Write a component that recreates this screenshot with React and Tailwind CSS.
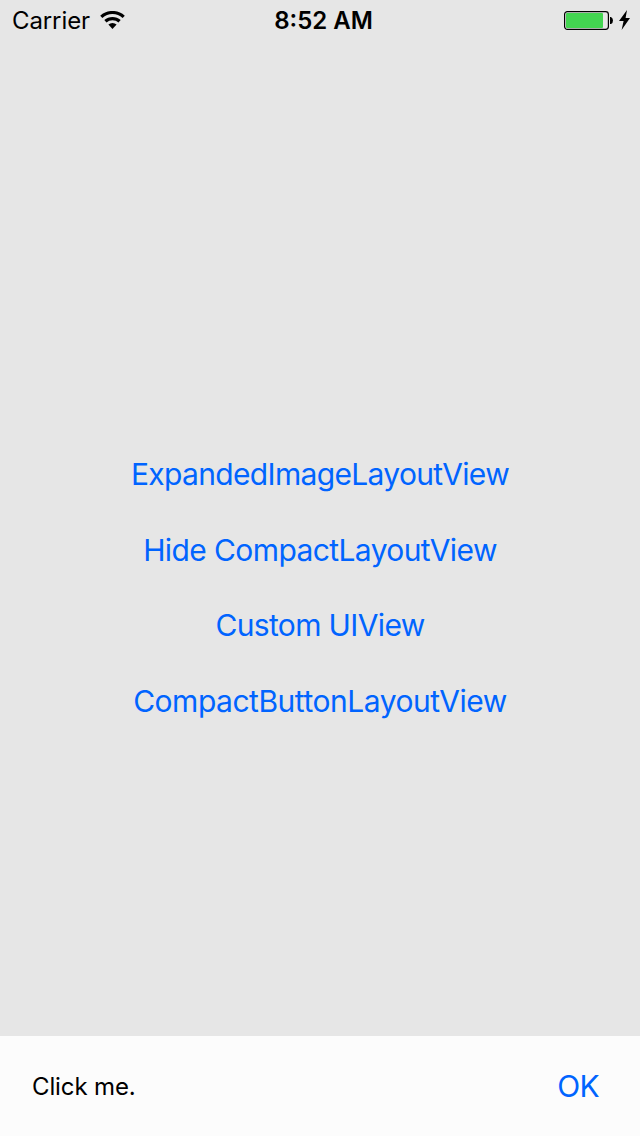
const actions = [
  { label: 'ExpandedImageLayoutView', spacing: 'mb-10 tracking-[-0.66px]' },
  { label: 'Hide CompactLayoutView', spacing: 'mb-[39px] tracking-[-0.6px]' },
  { label: 'Custom UIView', spacing: 'mb-10 tracking-[-0.64px]' },
  { label: 'CompactButtonLayoutView', spacing: 'tracking-[-0.48px]' },
];

function WifiIcon() {
  return (
    <svg className="mt-[5px]" width="25" height="18" viewBox="0 0 25 18" fill="none" stroke="black" strokeWidth="3.2">
      <path d="M1.3 5.9a16.5 16.5 0 0 1 22.4 0" />
      <path d="M5.4 10.3a10.5 10.5 0 0 1 14.2 0" />
      <path d="M12.5 18l-4.1-4.4a6 6 0 0 1 8.2 0z" fill="black" stroke="none" />
    </svg>
  );
}

function StatusBar() {
  return (
    <header className="grid h-10 shrink-0 grid-cols-[1fr_120px_1fr] items-start pl-3 pr-[10px] pt-1.5 text-[24px] leading-[29px] text-black">
      <div className="flex items-start gap-[10px]">
        <span className="whitespace-nowrap tracking-[-0.1px]">Carrier</span>
        <WifiIcon />
      </div>
      <div className="whitespace-nowrap pl-[5px] text-center font-semibold">8:52 AM</div>
      <div className="flex items-start justify-end gap-[5px]">
        <svg className="mt-[5px]" width="50" height="19" viewBox="0 0 50 19">
          <rect x="0.6" y="0.6" width="43.8" height="17.8" rx="2.8" fill="none" stroke="black" strokeWidth="1.2" />
          <rect x="2" y="2" width="37" height="15" rx="1" fill="#43d551" />
          <path d="M46 6h1q2 1 2 3.5t-2 3.5h-1z" fill="black" />
        </svg>
        <svg className="mt-1" width="11" height="20" viewBox="0 0 11 20">
          <path d="M8 0L0 11h4.6L2.6 20 11 8H6.6z" />
        </svg>
      </div>
    </header>
  );
}

export default function App() {
  return (
    <div className="flex h-[1136px] w-[640px] flex-col bg-[#e6e6e6] font-['Inter',sans-serif]">
      <StatusBar />
      <main className="flex flex-1 flex-col items-center pt-[416px] text-[30px] leading-9 text-[#0064ff]">
        {actions.map(({ label, spacing }) => (
          <button key={label} className={`whitespace-nowrap ${spacing}`}>{label}</button>
        ))}
      </main>
      <footer className="flex h-[100px] shrink-0 items-center justify-between bg-[#fcfcfc] pl-8 pr-[41px]">
        <span className="pt-px text-[24px] leading-[29px] tracking-[-0.12px] text-black">Click me.</span>
        <button className="text-[30px] leading-9 tracking-[-0.7px] text-[#0064ff]">OK</button>
      </footer>
    </div>
  );
}
